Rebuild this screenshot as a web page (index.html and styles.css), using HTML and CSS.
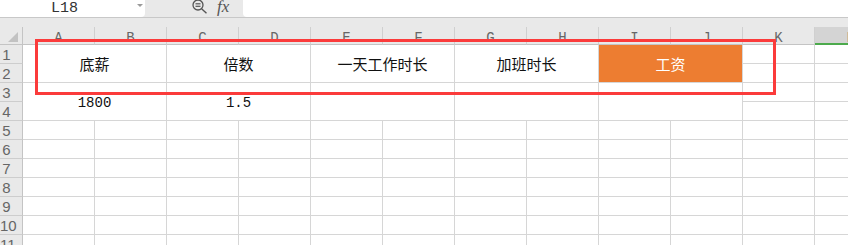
FILE: index.html
```html
<!DOCTYPE html>
<html lang="zh-CN">
<head>
<meta charset="utf-8">
<title>Sheet</title>
<link rel="stylesheet" href="styles.css">
</head>
<body>
<div class="app">
  <div class="toolbar">
    <div class="namebox"><span class="nb-text">L18</span><span class="nb-arrow"></span></div>
    <div class="tools">
      <svg class="zoom-ic" width="18" height="15" viewBox="0 0 18 15">
        <circle cx="6" cy="5" r="5" fill="none" stroke="#555" stroke-width="1.3"/>
        <line x1="3.5" y1="3.8" x2="8.5" y2="3.8" stroke="#555" stroke-width="1.2"/>
        <line x1="3.5" y1="6.3" x2="8.5" y2="6.3" stroke="#555" stroke-width="1.2"/>
        <line x1="9.6" y1="8.8" x2="14.5" y2="13.2" stroke="#555" stroke-width="1.4"/>
      </svg>
      <span class="fx">fx</span>
    </div>
    <div class="formula"></div>
  </div>
  <div class="strip"></div>
  <div class="sheet">
    <div class="corner"><span class="tri"></span></div>
    <div class="ch">A</div><div class="ch">B</div><div class="ch">C</div><div class="ch">D</div><div class="ch">E</div><div class="ch">F</div><div class="ch">G</div><div class="ch">H</div><div class="ch">I</div><div class="ch">J</div><div class="ch">K</div><div class="ch sel">L</div>

    <div class="rh">1</div>
    <div class="c m cjk">底薪</div>
    <div class="c m cjk">倍数</div>
    <div class="c m cjk">一天工作时长</div>
    <div class="c m cjk">加班时长</div>
    <div class="c m cjk orange">工资</div>
    <div class="c"></div><div class="c"></div>

    <div class="rh">2</div>
    <div class="c"></div><div class="c"></div>

    <div class="rh">3</div>
    <div class="c m num">1800</div>
    <div class="c m num">1.5</div>
    <div class="c m"></div>
    <div class="c m"></div>
    <div class="c m"></div>
    <div class="c"></div><div class="c"></div>

    <div class="rh">4</div>
    <div class="c"></div><div class="c"></div>

    <div class="rh">5</div>
    <div class="c"></div><div class="c"></div><div class="c"></div><div class="c"></div><div class="c"></div><div class="c"></div><div class="c"></div><div class="c"></div><div class="c"></div><div class="c"></div><div class="c"></div><div class="c"></div>
    <div class="rh">6</div>
    <div class="c"></div><div class="c"></div><div class="c"></div><div class="c"></div><div class="c"></div><div class="c"></div><div class="c"></div><div class="c"></div><div class="c"></div><div class="c"></div><div class="c"></div><div class="c"></div>
    <div class="rh">7</div>
    <div class="c"></div><div class="c"></div><div class="c"></div><div class="c"></div><div class="c"></div><div class="c"></div><div class="c"></div><div class="c"></div><div class="c"></div><div class="c"></div><div class="c"></div><div class="c"></div>
    <div class="rh">8</div>
    <div class="c"></div><div class="c"></div><div class="c"></div><div class="c"></div><div class="c"></div><div class="c"></div><div class="c"></div><div class="c"></div><div class="c"></div><div class="c"></div><div class="c"></div><div class="c"></div>
    <div class="rh">9</div>
    <div class="c"></div><div class="c"></div><div class="c"></div><div class="c"></div><div class="c"></div><div class="c"></div><div class="c"></div><div class="c"></div><div class="c"></div><div class="c"></div><div class="c"></div><div class="c"></div>
    <div class="rh">10</div>
    <div class="c"></div><div class="c"></div><div class="c"></div><div class="c"></div><div class="c"></div><div class="c"></div><div class="c"></div><div class="c"></div><div class="c"></div><div class="c"></div><div class="c"></div><div class="c"></div>
    <div class="rh">11</div>
    <div class="c"></div><div class="c"></div><div class="c"></div><div class="c"></div><div class="c"></div><div class="c"></div><div class="c"></div><div class="c"></div><div class="c"></div><div class="c"></div><div class="c"></div><div class="c"></div>
  </div>
  <div class="annot"></div>
</div>
</body>
</html>
```

FILE: styles.css
```css
* { box-sizing: border-box; }
html, body { margin: 0; padding: 0; }
body {
  width: 848px;
  height: 245px;
  overflow: hidden;
  background: #ffffff;
  font-family: "Liberation Sans", Arial, sans-serif;
}
.app {
  position: relative;
  width: 848px;
  height: 245px;
  overflow: hidden;
  background: #e9e9e9;
}
.toolbar {
  display: flex;
  height: 18px;
  border-bottom: 1px solid #c8c8c8;
  background: #e9e9e9;
}
.namebox {
  width: 145px;
  height: 17px;
  background: #ffffff;
  border-bottom-right-radius: 4px;
  display: flex;
  align-items: center;
}
.nb-text {
  flex: 1;
  text-align: center;
  padding-right: 8px;
  font-family: "Liberation Mono", "DejaVu Sans Mono", monospace;
  font-size: 15px;
  line-height: 17px;
  color: #333333;
  padding-bottom: 1px;
}
.nb-arrow {
  width: 0;
  height: 0;
  border-left: 3px solid transparent;
  border-right: 3px solid transparent;
  border-top: 3px solid #9a9a9a;
  margin-right: 2px;
  margin-bottom: 6px;
}
.tools {
  width: 98px;
  display: flex;
  align-items: flex-start;
  padding-left: 47px;
}
.zoom-ic { display: block; }
.fx {
  margin-left: 7px;
  font-family: "Liberation Serif", "Times New Roman", serif;
  font-style: italic;
  font-size: 17px;
  line-height: 15px;
  margin-top: -1px;
  color: #555555;
}
.formula {
  flex: 1;
  height: 17px;
  background: #ffffff;
  border-bottom-left-radius: 4px;
}
.strip {
  height: 9px;
  background: #e9e9e9;
}
.sheet {
  display: grid;
  grid-template-columns: 23px repeat(12, 72px);
  grid-template-rows: 18px repeat(11, 19px);
  width: max-content;
  background: #ffffff;
}
.corner {
  background: #e9e9e9;
  border-right: 1px solid #c4c4c4;
  border-bottom: 1px solid #c4c4c4;
  display: flex;
  justify-content: flex-end;
  align-items: flex-end;
  padding-right: 4px;
  padding-bottom: 2px;
}
.tri {
  width: 10px;
  height: 10px;
  background: #c2c2c2;
  clip-path: polygon(100% 0, 100% 100%, 0 100%);
}
.ch {
  background: #e9e9e9;
  border-right: 1px solid #d0d0d0;
  border-bottom: 1px solid #c4c4c4;
  text-align: center;
  font-family: "Liberation Mono", "DejaVu Sans Mono", monospace;
  font-size: 14px;
  line-height: 17px;
  padding-top: 3px;
  color: #666666;
}
.ch.sel {
  background: #d4d4d4;
  border-bottom: 2px solid #4caa4c;
}
.rh {
  background: #e9e9e9;
  border-right: 1px solid #c4c4c4;
  border-bottom: 1px solid #cdcdcd;
  padding-right: 9px;
  text-align: center;
  font-family: "Liberation Sans", Arial, sans-serif;
  font-size: 15px;
  line-height: 18px;
  padding-top: 1px;
  color: #666666;
}
.c {
  border-right: 1px solid #d6d6d6;
  border-bottom: 1px solid #d6d6d6;
  background: #ffffff;
}
.m {
  grid-column: span 2;
  grid-row: span 2;
  display: flex;
  align-items: center;
  justify-content: center;
  color: #111111;
}
.cjk {
  font-family: "Noto Sans CJK SC", "Liberation Sans", sans-serif;
  font-size: 15px;
  padding-bottom: 1px;
}
.num {
  font-family: "Liberation Mono", "DejaVu Sans Mono", monospace;
  font-size: 14px;
  padding-top: 2px;
}
.orange {
  background: #ed7d31;
  color: #ffffff;
}
.annot {
  position: absolute;
  left: 35px;
  top: 39px;
  width: 741px;
  height: 56px;
  border: 3px solid #fb3b3b;
}
```
